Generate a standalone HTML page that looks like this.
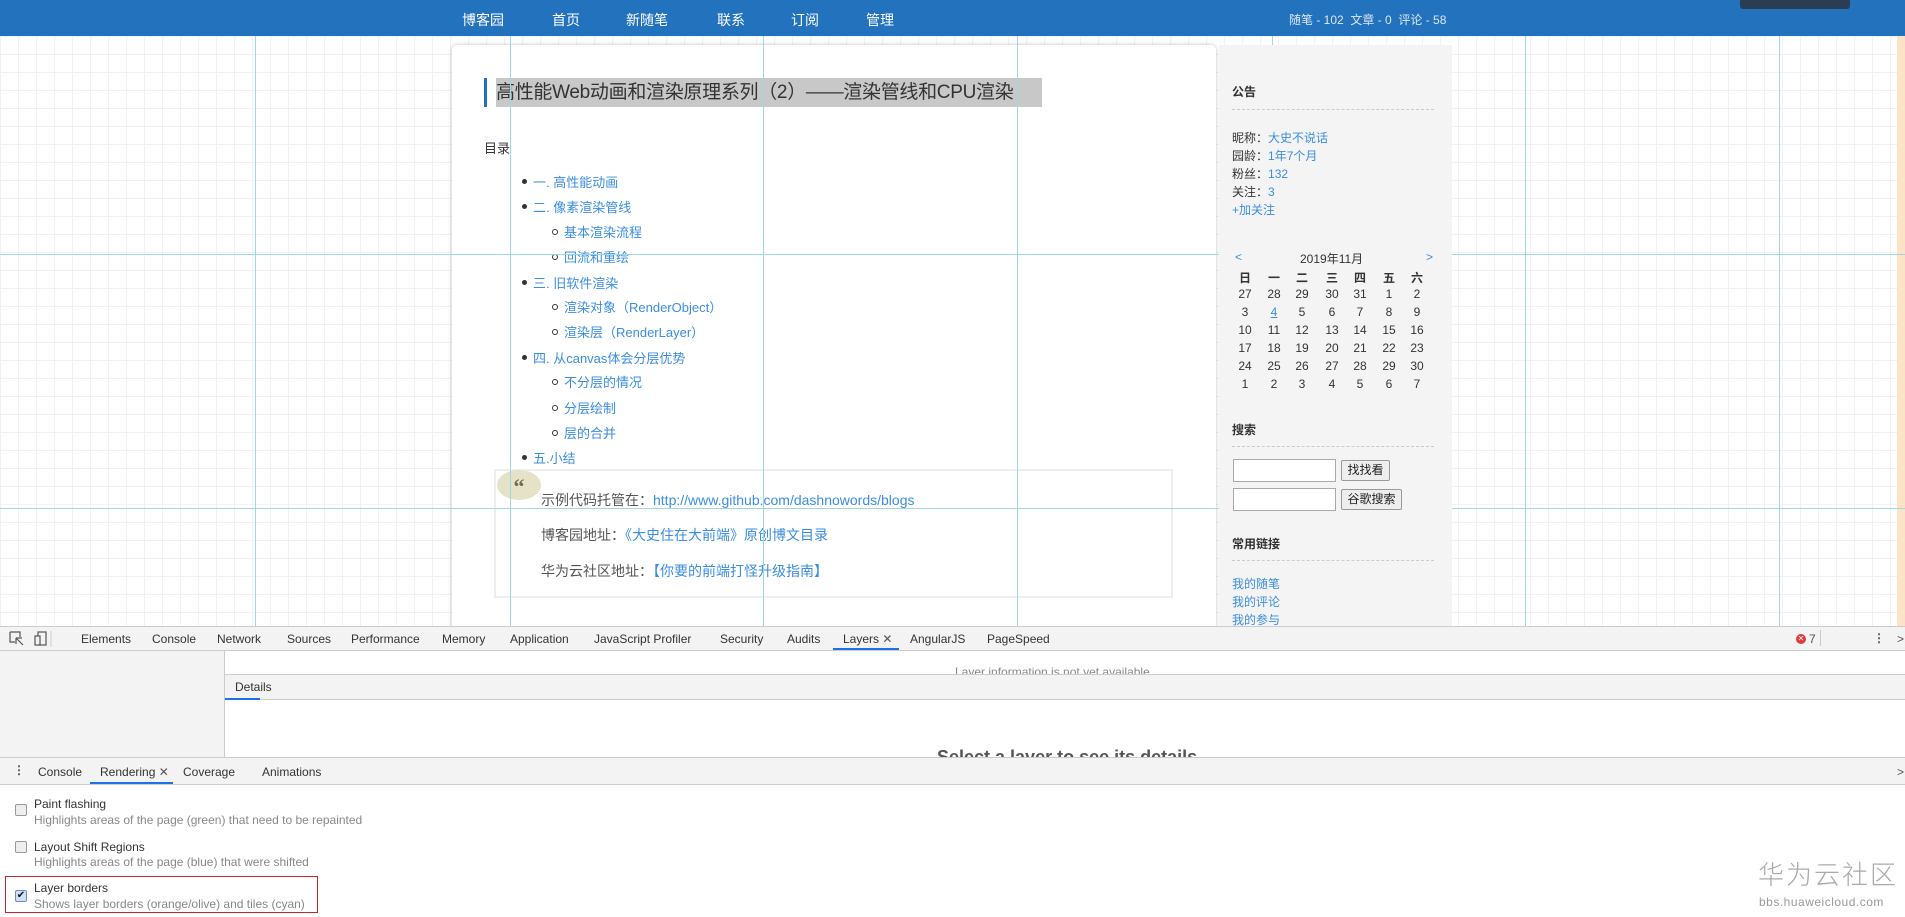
<!DOCTYPE html>
<html><head><meta charset="utf-8">
<style>
*{margin:0;padding:0;box-sizing:border-box}
body{width:1905px;height:917px;overflow:hidden;position:relative;font-family:"Liberation Sans","Noto Sans CJK SC",sans-serif;background:#fff}
.a{position:absolute;white-space:nowrap}
#page{position:absolute;left:0;top:0;width:1905px;height:626px;overflow:hidden;
background-color:#fff;
background-image:linear-gradient(#edf3f3 1px,transparent 1px),linear-gradient(90deg,#edf3f3 1px,transparent 1px);
background-size:18px 18px}
.nav{position:absolute;left:0;top:0;width:1905px;height:36px;background:#2272bd}
.nav span{position:absolute;top:10px;color:#fff;font-size:14px}
.cl{position:absolute;background:#9ed8e0}
.card{position:absolute;left:452px;top:45px;width:764px;height:600px;background:#fff;border-radius:5px;box-shadow:0 0 4px rgba(0,0,0,.25)}
.lk{color:#3b8de0}
.li{position:absolute;font-size:13px;color:#3b8de0;white-space:nowrap}
.d{position:absolute;width:5px;height:5px;border-radius:50%;background:#333}
.o{position:absolute;width:6px;height:6px;border-radius:50%;border:1px solid #333}
.side{position:absolute;left:1219px;top:45px;width:233px;height:590px;background:#f4f4f4}
.s{position:absolute;font-size:12px;color:#333;white-space:nowrap}
.s.lk{color:#3b8de0}
.dash{position:absolute;left:1232px;width:202px;border-top:1px dashed #ccc}
.cal{position:absolute;font-size:12px;color:#333;width:28px;text-align:center}
.dt{position:absolute;font-size:12px;color:#333;white-space:nowrap}
.chk{position:absolute;width:12px;height:12px;border:1px solid #999;border-radius:2px;background:#eee}
.t1{position:absolute;font-size:12px;color:#333}
.t2{position:absolute;font-size:12px;color:#888}
</style></head><body>
<div id="page">
 <div class="nav">
  <span style="left:462px">博客园</span><span style="left:552px">首页</span><span style="left:626px">新随笔</span><span style="left:717px">联系</span><span style="left:791px">订阅</span><span style="left:866px">管理</span>
  <span style="left:1289px;top:11px;font-size:12px;color:#dde8f4">随笔 - 102&nbsp; 文章 - 0&nbsp; 评论 - 58</span>
 </div>
 <div class="a" style="left:1740px;top:0;width:110px;height:9px;background:#2b3d52;border-radius:0 0 3px 3px"></div>
 <div class="a" style="left:1897px;top:36px;width:8px;height:590px;background:#fbe3c6"></div>

 <div class="card">
  <div class="a" style="left:32px;top:33px;width:3px;height:29px;background:#2272bd"></div>
  <div class="a" style="left:44px;top:33px;width:546px;height:29px;background:#c8c8c8;color:#333;font-size:19px;line-height:29px;letter-spacing:-0.3px">高性能Web动画和渲染原理系列（2）——渲染管线和CPU渲染</div>
  <div class="a" style="left:32px;top:93px;font-size:13px;color:#333">目录</div>
 </div>
 <div class="d" style="left:522px;top:179px"></div><div class="li" style="left:533px;top:172px">一. 高性能动画</div>
 <div class="d" style="left:522px;top:204px"></div><div class="li" style="left:533px;top:197px">二. 像素渲染管线</div>
 <div class="o" style="left:552px;top:229px"></div><div class="li" style="left:564px;top:222px">基本渲染流程</div>
 <div class="o" style="left:552px;top:254px"></div><div class="li" style="left:564px;top:247px">回流和重绘</div>
 <div class="d" style="left:522px;top:280px"></div><div class="li" style="left:533px;top:273px">三. 旧软件渲染</div>
 <div class="o" style="left:552px;top:304px"></div><div class="li" style="left:564px;top:297px">渲染对象（RenderObject）</div>
 <div class="o" style="left:552px;top:329px"></div><div class="li" style="left:564px;top:322px">渲染层（RenderLayer）</div>
 <div class="d" style="left:522px;top:355px"></div><div class="li" style="left:533px;top:348px">四. 从canvas体会分层优势</div>
 <div class="o" style="left:552px;top:379px"></div><div class="li" style="left:564px;top:372px">不分层的情况</div>
 <div class="o" style="left:552px;top:405px"></div><div class="li" style="left:564px;top:398px">分层绘制</div>
 <div class="o" style="left:552px;top:430px"></div><div class="li" style="left:564px;top:423px">层的合并</div>
 <div class="d" style="left:522px;top:455px"></div><div class="li" style="left:533px;top:448px">五.小结</div>

 <div class="a" style="left:494px;top:469px;width:679px;height:129px;border:2px solid #eee"></div>
 <div class="a" style="left:497px;top:470px;width:44px;height:30px;border-radius:50%;background:#e6e2c8;color:#6e6a55;font-size:22px;font-weight:bold;text-align:center;line-height:34px;font-family:'Liberation Serif',serif">“</div>
 <div class="a" style="left:541px;top:490px;font-size:14px;color:#555">示例代码托管在：<span class="lk">http://www.github.com/dashnowords/blogs</span></div>
 <div class="a" style="left:541px;top:525px;font-size:14px;color:#555">博客园地址：<span class="lk">《大史住在大前端》原创博文目录</span></div>
 <div class="a" style="left:541px;top:561px;font-size:14px;color:#555">华为云社区地址：<span class="lk">【你要的前端打怪升级指南】</span></div>

 <div class="cl" style="left:255px;top:36px;width:1px;height:590px"></div>
 <div class="cl" style="left:510px;top:36px;width:1px;height:590px"></div>
 <div class="cl" style="left:763px;top:36px;width:1px;height:590px"></div>
 <div class="cl" style="left:1017px;top:36px;width:1px;height:590px"></div>
 <div class="cl" style="left:1525px;top:36px;width:1px;height:590px"></div>
 <div class="cl" style="left:1779px;top:36px;width:1px;height:590px"></div>
 <div class="cl" style="left:0;top:254px;width:1905px;height:1px"></div>
 <div class="cl" style="left:0;top:508px;width:1905px;height:1px"></div>

 <div class="side"></div>
 <div class="s" style="left:1232px;top:83px;font-weight:bold">公告</div>
 <div class="dash" style="top:109px"></div>
 <div class="s" style="left:1232px;top:129px">昵称：<span class="lk">大史不说话</span></div>
 <div class="s" style="left:1232px;top:147px">园龄：<span class="lk">1年7个月</span></div>
 <div class="s" style="left:1232px;top:165px">粉丝：<span class="lk">132</span></div>
 <div class="s" style="left:1232px;top:183px">关注：<span class="lk">3</span></div>
 <div class="s lk" style="left:1232px;top:201px">+加关注</div>
 <div class="s lk" style="left:1235px;top:250px">&lt;</div>
 <div class="s" style="left:1300px;top:250px">2019年11月</div>
 <div class="s lk" style="left:1426px;top:250px">&gt;</div>
 <div id="cal"></div>
 <div class="s" style="left:1232px;top:421px;font-weight:bold">搜索</div>
 <div class="dash" style="top:446px"></div>
 <div class="a" style="left:1233px;top:459px;width:103px;height:23px;background:#fff;border:1px solid #aaa"></div>
 <div class="a" style="left:1341px;top:460px;width:49px;height:21px;background:#eee;border:1px solid #999;border-radius:2px;font-size:12px;text-align:center;line-height:19px;color:#222">找找看</div>
 <div class="a" style="left:1233px;top:488px;width:103px;height:23px;background:#fff;border:1px solid #aaa"></div>
 <div class="a" style="left:1341px;top:489px;width:61px;height:21px;background:#eee;border:1px solid #999;border-radius:2px;font-size:12px;text-align:center;line-height:19px;color:#222">谷歌搜索</div>
 <div class="s" style="left:1232px;top:535px;font-weight:bold">常用链接</div>
 <div class="dash" style="top:560px"></div>
 <div class="s lk" style="left:1232px;top:575px">我的随笔</div>
 <div class="s lk" style="left:1232px;top:593px">我的评论</div>
 <div class="s lk" style="left:1232px;top:611px">我的参与</div>
 <div class="cl" style="left:1272px;top:36px;width:1px;height:9px"></div>
</div>

<!-- devtools -->
<div class="a" style="left:0;top:626px;width:1905px;height:25px;background:#f3f3f3;border-top:1px solid #ccc;border-bottom:1px solid #ccc"></div>
<svg class="a" style="left:9px;top:631px" width="46" height="16" viewBox="0 0 46 16"><path d="M1 1h10v5M1 1v10h5M7 7l7 7M7 7v6M7 7h6" fill="none" stroke="#555" stroke-width="1.2"/><rect x="29" y="1" width="8" height="13" fill="none" stroke="#555" stroke-width="1.2"/><rect x="26" y="5" width="5" height="9" fill="#f3f3f3" stroke="#555" stroke-width="1.2"/><line x1="42" y1="0" x2="42" y2="16" stroke="#ccc"/></svg>
<div class="dt" style="left:81px;top:632px">Elements</div>
<div class="dt" style="left:152px;top:632px">Console</div>
<div class="dt" style="left:217px;top:632px">Network</div>
<div class="dt" style="left:287px;top:632px">Sources</div>
<div class="dt" style="left:351px;top:632px">Performance</div>
<div class="dt" style="left:442px;top:632px">Memory</div>
<div class="dt" style="left:510px;top:632px">Application</div>
<div class="dt" style="left:594px;top:632px">JavaScript Profiler</div>
<div class="dt" style="left:720px;top:632px">Security</div>
<div class="dt" style="left:787px;top:632px">Audits</div>
<div class="dt" style="left:843px;top:632px">Layers <span style="color:#555">✕</span></div>
<div class="a" style="left:833px;top:648px;width:66px;height:2px;background:#1a73e8"></div>
<div class="dt" style="left:910px;top:632px">AngularJS</div>
<div class="dt" style="left:987px;top:632px">PageSpeed</div>
<div class="a" style="left:1796px;top:634px;width:10px;height:10px;border-radius:50%;background:#e0383e;color:#fff;font-size:8px;line-height:10px;text-align:center">✕</div>
<div class="dt" style="left:1809px;top:632px;color:#555">7</div>
<div class="a" style="left:1820px;top:630px;width:1px;height:16px;background:#ccc"></div>
<div class="dt" style="left:1873px;top:631px;font-weight:bold;color:#555">⋮</div>
<div class="dt" style="left:1897px;top:632px;color:#555">&gt;</div>

<div class="a" style="left:0;top:651px;width:225px;height:106px;background:#f3f3f3;border-right:1px solid #ccc"></div>
<div class="a" style="left:225px;top:651px;width:1680px;height:106px;background:#fff;overflow:hidden">
 <div class="a" style="left:730px;top:14px;font-size:12px;color:#888">Layer information is not yet available</div>
 <div class="a" style="left:0;top:23px;width:1680px;height:26px;background:#f3f3f3;border-top:1px solid #ccc;border-bottom:1px solid #ccc"></div>
 <div class="a" style="left:10px;top:29px;font-size:12px;color:#333">Details</div>
 <div class="a" style="left:0;top:47px;width:35px;height:2px;background:#1a73e8"></div>
 <div class="a" style="left:712px;top:96px;font-size:18px;font-weight:bold;color:#555">Select a layer to see its details</div>
</div>

<div class="a" style="left:0;top:757px;width:1905px;height:28px;background:#f3f3f3;border-top:1px solid #ccc;border-bottom:1px solid #ccc"></div>
<div class="dt" style="left:13px;top:763px;font-weight:bold;color:#555">⋮</div>
<div class="dt" style="left:38px;top:765px">Console</div>
<div class="dt" style="left:100px;top:765px">Rendering <span style="color:#555">✕</span></div>
<div class="a" style="left:90px;top:782px;width:83px;height:2px;background:#1a73e8"></div>
<div class="dt" style="left:183px;top:765px">Coverage</div>
<div class="dt" style="left:262px;top:765px">Animations</div>
<div class="dt" style="left:1897px;top:765px;color:#555">&gt;</div>

<div class="chk" style="left:15px;top:804px"></div>
<div class="t1" style="left:34px;top:797px">Paint flashing</div>
<div class="t2" style="left:34px;top:813px">Highlights areas of the page (green) that need to be repainted</div>
<div class="chk" style="left:15px;top:841px"></div>
<div class="t1" style="left:34px;top:840px">Layout Shift Regions</div>
<div class="t2" style="left:34px;top:855px">Highlights areas of the page (blue) that were shifted</div>
<div class="a" style="left:5px;top:876px;width:313px;height:37px;border:1px solid #c8232c"></div>
<div class="chk" style="left:15px;top:890px;background:#cfe0f5;border-color:#6d8fbf;font-size:10px;line-height:10px;text-align:center;color:#111">✔</div>
<div class="t1" style="left:34px;top:881px">Layer borders</div>
<div class="t2" style="left:34px;top:897px">Shows layer borders (orange/olive) and tiles (cyan)</div>

<div class="a" style="left:1758px;top:855px;font-size:26px;color:#aaa;letter-spacing:2px;font-family:'Noto Sans CJK SC',sans-serif;font-weight:300">华为云社区</div>
<div class="a" style="left:1759px;top:895px;font-size:12px;color:#999;letter-spacing:.5px">bbs.huaweicloud.com</div>

<script>
var cols=[1245,1274,1302,1332,1360,1389,1417];
var rows=[["日","一","二","三","四","五","六"],["27","28","29","30","31","1","2"],["3","4","5","6","7","8","9"],["10","11","12","13","14","15","16"],["17","18","19","20","21","22","23"],["24","25","26","27","28","29","30"],["1","2","3","4","5","6","7"]];
var ys=[269,287,305,323,341,359,377];var h="";
rows.forEach(function(r,i){r.forEach(function(c,j){var st="left:"+(cols[j]-14)+"px;top:"+ys[i]+"px;";if(i==0)st+="font-weight:bold;";if(i==2&&j==1)st+="color:#3b8de0;text-decoration:underline;";h+='<div class="cal" style="'+st+'">'+c+'</div>';});});
document.getElementById("cal").outerHTML=h;
</script>
</body></html>
